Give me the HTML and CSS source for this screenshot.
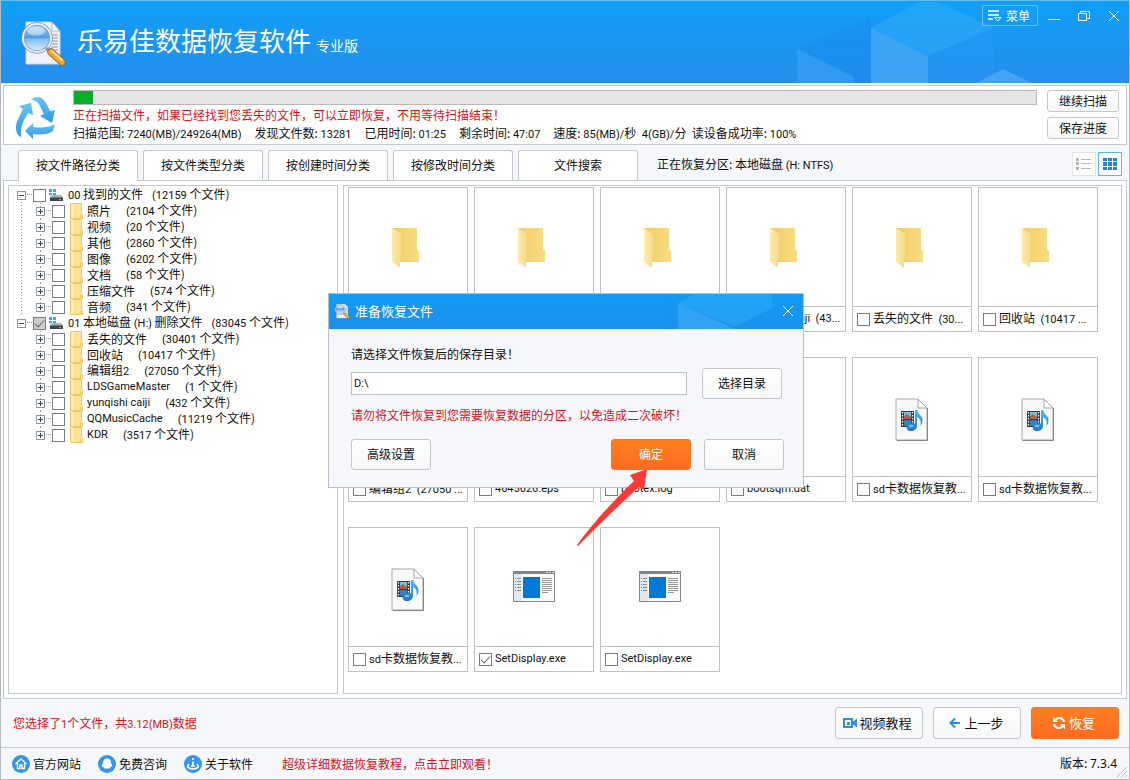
FILE: index.html
```html
<!DOCTYPE html>
<html lang="zh-CN">
<head>
<meta charset="utf-8">
<meta name="viewport" content="width=device-width, initial-scale=1">
<title>乐易佳数据恢复软件</title>
<link rel="stylesheet" href="styles.css">
</head>
<body>
<svg class="sprite" aria-hidden="true">
  <defs>
    <linearGradient id="g-front" x1="0" x2="1"><stop offset="0" stop-color="#fdebae"/><stop offset="1" stop-color="#f8db86"/></linearGradient>
    <linearGradient id="g-back" x1="0" x2="1"><stop offset="0" stop-color="#efcb66"/><stop offset="1" stop-color="#fadd82"/></linearGradient>
    <linearGradient id="g-lens" x1="0" y1="0" x2="0" y2="1"><stop offset="0" stop-color="#b5d9fb"/><stop offset=".48" stop-color="#4f9de8"/><stop offset=".55" stop-color="#86bef3"/><stop offset="1" stop-color="#e2f1ff"/></linearGradient>
    <linearGradient id="g-arrow" x1="0" y1="0" x2="0" y2="1"><stop offset="0" stop-color="#69c4f3"/><stop offset="1" stop-color="#2c97e4"/></linearGradient>
    <linearGradient id="g-note" x1="0" y1="0" x2="0" y2="1"><stop offset="0" stop-color="#55b8ee"/><stop offset="1" stop-color="#1878cf"/></linearGradient>
  </defs>
  <symbol id="logo" viewBox="0 0 46 46">
    <path d="M5 1h25l9 9v33H5z" fill="#eef1fa" stroke="#c9d3e8"/>
    <path d="M31 1v9h8z" fill="#fff" stroke="#9fb3d3"/>
    <path d="M29 14h8M31 17h6M31 20h6M31 23h6M30 26h7M28 29h9" stroke="#8593b5" stroke-width="1.2"/>
    <circle cx="16" cy="17" r="14" fill="url(#g-lens)" stroke="#7d8fae" stroke-width="3.4"/>
    <circle cx="16" cy="17" r="14" fill="none" stroke="#e6eef9" stroke-width="2"/>
    <ellipse cx="15" cy="10" rx="9" ry="4.500" fill="#fff" opacity=".45"/>
    <path d="M25 27l4 4" stroke="#8b95a8" stroke-width="3"/>
    <path d="M30 31l11 10" stroke="#a9681a" stroke-width="7.500" stroke-linecap="round"/>
    <path d="M30 31l11 10" stroke="#f3a72e" stroke-width="5.500" stroke-linecap="round"/>
    <path d="M31 30l10 9" stroke="#ffe39a" stroke-width="1.800" stroke-linecap="round"/>
  </symbol>
  <symbol id="recycle" viewBox="0 0 42 44">
    <g fill="url(#g-arrow)">
      <path d="M15 2c2-1 4-2 7-2 4 0 6 3 8 6l4 8 5-1-3 13-12-7 4-2-4-8c-2-4-5-6-9-7z"/>
      <path d="M3 9l12-3 2 12-5-2c-4 7-8 13-7 24-4-2-5-6-5-10 0-6 4-11 7-18z"/>
      <path d="M9 34l8-8v4c8 1 15 1 22-3l-2 7c-6 4-13 4-20 3v5z"/>
    </g>
  </symbol>
  <symbol id="menu" viewBox="0 0 14 12">
    <path d="M0 1h11M0 5h11M0 9h5" stroke="#fff" stroke-width="1.300" fill="none"/>
    <path d="M6.500 7.500h6.500l-3.200 3.500z" stroke="#fff" fill="none"/>
  </symbol>
  <symbol id="drive" viewBox="0 0 16 16">
    <path d="M1 2h3v3H1zM5 2h3v3H5zM1 6h3v2H1zM5 6h3v2H5z" fill="#21b3e0"/>
    <path d="M4 8h9l2 3H2z" fill="#aab1b4"/>
    <path d="M2 10.500h13V14H2z" fill="#3c464a"/><path d="M11 12h2v1h-2z" fill="#4fe36a"/>
  </symbol>
  <symbol id="dir" viewBox="0 0 16 16">
    <path d="M2.500.5h11v10l1 1v4h-12z" fill="#fbe295" stroke="#edcb6c"/>
    <path d="M3.500 1h2v14h-2z" fill="#fff0b8"/><path d="M12.500 11.500v4" stroke="#edcb6c"/>
  </symbol>
  <symbol id="folder" viewBox="0 0 28 41">
    <path d="M0 0h25v21l2 2v11H2z" fill="url(#g-back)"/>
    <path d="M0 0l9 6v23l-1 2v9l-8-6z" fill="url(#g-front)"/>
  </symbol>
  <symbol id="media" viewBox="0 0 34 43">
    <path d="M1 1h22l9 9v32H1z" fill="#f9f9fa" stroke="#a5a7aa"/>
    <path d="M32.500 10v32.500H2" fill="none" stroke="#838689"/>
    <path d="M23 1v9h9z" fill="#fff" stroke="#a5a7aa"/>
    <path d="M6 13h13v16H6z" fill="#353b40"/>
    <path d="M9 14h7v6H9z" fill="#7cc0df"/><path d="M9 18l3-2 4 3v2H9z" fill="#b85f43"/><path d="M9 22h7v6H9z" fill="#2f80c4"/>
    <path d="M7.500 14v15M17.500 14v15" stroke="#fff" stroke-width="1.300" stroke-dasharray="1.500 1.500"/>
    <path d="M20 12h2.500c0 5 5 5 5 10 0 3-1 4-2 6 1-6-1-8-3.500-9v9c0 3-3 5-6 5s-5-2-4-4.500 4-4 8-3z" fill="url(#g-note)"/>
    <ellipse cx="16" cy="28" rx="2.500" ry="1.300" fill="#8bd0f5" opacity=".7"/>
  </symbol>
  <symbol id="exe" viewBox="0 0 42 32">
    <path d="M.5.5h41v30H.5z" fill="#f8f9fa" stroke="#858585"/>
    <path d="M1 3h8v27H1z" fill="#dfe9f2"/>
    <path d="M0 0h42v3H0z" fill="#858585"/>
    <path d="M33 1.500h2M36 1.500h2M39 1.500h2" stroke="#ddd"/>
    <path d="M10 6h17v21H10z" fill="#0078d7"/>
    <path d="M2 7.500h1M4 7.500h4M2 10.500h1M4 10.500h4M2 13.500h1M4 13.500h4M2 16.500h1M4 16.500h4M2 19.500h1M4 19.500h4" stroke="#888"/>
    <path d="M29 7.500h10M29 9.500h10M29 11.500h10M29 13.500h10M29 15.500h10M29 17.500h10M29 19.500h10M29 21.500h6" stroke="#999"/>
  </symbol>
</svg>

<div class="window">
  <header class="header">
    <svg class="cubes" viewBox="0 0 340 82" aria-hidden="true">
      <path d="M8 48L82 16v66H65v-6z" fill="#1684ee" opacity=".3"/>
      <path d="M8 48l57 28v6H8z" fill="#4fb0f8" opacity=".35"/>
      <path d="M82 27l48-26h20l55 26-66 28z" fill="#35b0f8" opacity=".45"/>
      <path d="M82 27l57 28v27H82z" fill="#50adf6" opacity=".6"/>
      <path d="M139 55l66-28v55h-66z" fill="#2b9cf5" opacity=".3"/>
      <path d="M187 82l27-14 29 14z" fill="#55b1f6" opacity=".6"/>
    </svg>
    <svg class="logo" aria-hidden="true"><use href="#logo"/></svg>
    <h1 class="title">乐易佳数据恢复软件</h1>
    <span class="edition">专业版</span>
    <div class="controls">
      <button class="menu-btn" type="button"><svg class="menu-icon" aria-hidden="true"><use href="#menu"/></svg>菜单</button>
      <button class="win-btn" type="button" aria-label="最小化"><svg class="win-icon" viewBox="0 0 12 12"><path d="M0 9.500h12"/></svg></button>
      <button class="win-btn" type="button" aria-label="还原"><svg class="win-icon" viewBox="0 0 12 12"><path d="M.5 3.500h8v7h-8zM2.500 3V1.500h9v7H9"/></svg></button>
      <button class="win-btn" type="button" aria-label="关闭"><svg class="win-icon" viewBox="0 0 12 12"><path d="M1 1l10 10M11 1L1 11"/></svg></button>
    </div>
  </header>

  <section class="status">
    <svg class="recycle" aria-hidden="true"><use href="#recycle"/></svg>
    <div class="scan">
      <progress class="bar" value="2" max="100" aria-label="扫描进度"></progress>
      <p class="line alert">正在扫描文件，如果已经找到您丢失的文件，可以立即恢复，不用等待扫描结束！</p>
      <p class="line stats">
        <span>扫描范围: <span class="n">7240(MB)/249264(MB)</span></span>
        <span>发现文件数: <span class="n">13281</span></span>
        <span>已用时间: <span class="n">01:25</span></span>
        <span>剩余时间: <span class="n">47:07</span></span>
        <span>速度: <span class="n">85(MB)/</span>秒&nbsp; <span class="n">4(GB)/</span>分&nbsp; 读设备成功率: <span class="n">100%</span></span>
      </p>
    </div>
    <div class="scan-actions">
      <button class="btn small" type="button">继续扫描</button>
      <button class="btn small" type="button">保存进度</button>
    </div>
  </section>

  <nav class="tabs">
    <button class="tab active" type="button">按文件路径分类</button>
    <button class="tab" type="button">按文件类型分类</button>
    <button class="tab" type="button">按创建时间分类</button>
    <button class="tab" type="button">按修改时间分类</button>
    <button class="tab" type="button">文件搜索</button>
    <span class="partition">正在恢复分区: 本地磁盘 <span class="n">(H: NTFS)</span></span>
    <div class="views">
      <button class="view" type="button" aria-label="列表"><svg class="view-icon" viewBox="0 0 16 12"><path d="M0 0h3v3H0zM0 4h3v3H0zM0 9h3v3H0zM5 1h10v1H5zM5 5h10v1H5zM5 10h10v1H5z" fill="#b3b6ba"/></svg></button>
      <button class="view on" type="button" aria-label="图标"><svg class="view-icon" viewBox="0 0 16 12"><path d="M1 0h4v3H1zM6 0h4v3H6zM11 0h4v3h-4zM1 4h4v4H1zM6 4h4v4H6zM11 4h4v4h-4zM1 9h4v3H1zM6 9h4v3H6zM11 9h4v3h-4z" fill="#2384d8"/></svg></button>
    </div>
  </nav>

  <main class="main">
    <aside class="pane tree-pane">
      <ul class="tree">
        <li class="root linked">
          <div class="row"><button class="exp" type="button" aria-label="折叠"></button><label class="node"><input class="check" type="checkbox"><svg class="ico"><use href="#drive"/></svg><span class="name"><span class="n">00</span> 找到的文件</span><span class="count near"><span class="n">(12159</span> 个文件)</span></label></div>
          <ul class="kids">
            <li class="row"><button class="exp plus" type="button" aria-label="展开"></button><label class="node"><input class="check" type="checkbox"><svg class="ico"><use href="#dir"/></svg><span class="name">照片</span><span class="count"><span class="n">(2104</span> 个文件)</span></label></li>
            <li class="row"><button class="exp plus" type="button" aria-label="展开"></button><label class="node"><input class="check" type="checkbox"><svg class="ico"><use href="#dir"/></svg><span class="name">视频</span><span class="count"><span class="n">(20</span> 个文件)</span></label></li>
            <li class="row"><button class="exp plus" type="button" aria-label="展开"></button><label class="node"><input class="check" type="checkbox"><svg class="ico"><use href="#dir"/></svg><span class="name">其他</span><span class="count"><span class="n">(2860</span> 个文件)</span></label></li>
            <li class="row"><button class="exp plus" type="button" aria-label="展开"></button><label class="node"><input class="check" type="checkbox"><svg class="ico"><use href="#dir"/></svg><span class="name">图像</span><span class="count"><span class="n">(6202</span> 个文件)</span></label></li>
            <li class="row"><button class="exp plus" type="button" aria-label="展开"></button><label class="node"><input class="check" type="checkbox"><svg class="ico"><use href="#dir"/></svg><span class="name">文档</span><span class="count"><span class="n">(58</span> 个文件)</span></label></li>
            <li class="row"><button class="exp plus" type="button" aria-label="展开"></button><label class="node"><input class="check" type="checkbox"><svg class="ico"><use href="#dir"/></svg><span class="name">压缩文件</span><span class="count"><span class="n">(574</span> 个文件)</span></label></li>
            <li class="row"><button class="exp plus" type="button" aria-label="展开"></button><label class="node"><input class="check" type="checkbox"><svg class="ico"><use href="#dir"/></svg><span class="name">音频</span><span class="count"><span class="n">(341</span> 个文件)</span></label></li>
          </ul>
        </li>
        <li class="root">
          <div class="row"><button class="exp" type="button" aria-label="折叠"></button><label class="node"><input class="check partial" type="checkbox" checked><svg class="ico"><use href="#drive"/></svg><span class="name"><span class="n">01</span> 本地磁盘 <span class="n">(H:)</span> 删除文件</span><span class="count near"><span class="n">(83045</span> 个文件)</span></label></div>
          <ul class="kids">
            <li class="row"><button class="exp plus" type="button" aria-label="展开"></button><label class="node"><input class="check" type="checkbox"><svg class="ico"><use href="#dir"/></svg><span class="name">丢失的文件</span><span class="count"><span class="n">(30401</span> 个文件)</span></label></li>
            <li class="row"><button class="exp plus" type="button" aria-label="展开"></button><label class="node"><input class="check" type="checkbox"><svg class="ico"><use href="#dir"/></svg><span class="name">回收站</span><span class="count"><span class="n">(10417</span> 个文件)</span></label></li>
            <li class="row"><button class="exp plus" type="button" aria-label="展开"></button><label class="node"><input class="check" type="checkbox"><svg class="ico"><use href="#dir"/></svg><span class="name">编辑组<span class="n">2</span></span><span class="count"><span class="n">(27050</span> 个文件)</span></label></li>
            <li class="row"><button class="exp plus" type="button" aria-label="展开"></button><label class="node"><input class="check" type="checkbox"><svg class="ico"><use href="#dir"/></svg><span class="name n">LDSGameMaster</span><span class="count"><span class="n">(1</span> 个文件)</span></label></li>
            <li class="row"><button class="exp plus" type="button" aria-label="展开"></button><label class="node"><input class="check" type="checkbox"><svg class="ico"><use href="#dir"/></svg><span class="name n">yunqishi caiji</span><span class="count"><span class="n">(432</span> 个文件)</span></label></li>
            <li class="row"><button class="exp plus" type="button" aria-label="展开"></button><label class="node"><input class="check" type="checkbox"><svg class="ico"><use href="#dir"/></svg><span class="name n">QQMusicCache</span><span class="count"><span class="n">(11219</span> 个文件)</span></label></li>
            <li class="row"><button class="exp plus" type="button" aria-label="展开"></button><label class="node"><input class="check" type="checkbox"><svg class="ico"><use href="#dir"/></svg><span class="name n">KDR</span><span class="count"><span class="n">(3517</span> 个文件)</span></label></li>
          </ul>
        </li>
      </ul>
    </aside>

    <section class="pane files">
      <label class="tile"><span class="thumb"><svg class="folder"><use href="#folder"/></svg></span><span class="cap"><input class="check" type="checkbox"><span class="fname n">KDR</span></span></label>
      <label class="tile"><span class="thumb"><svg class="folder"><use href="#folder"/></svg></span><span class="cap"><input class="check" type="checkbox"><span class="fname n">LDSGameMaster</span></span></label>
      <label class="tile"><span class="thumb"><svg class="folder"><use href="#folder"/></svg></span><span class="cap"><input class="check" type="checkbox"><span class="fname n">QQMusicCache</span></span></label>
      <label class="tile"><span class="thumb"><svg class="folder"><use href="#folder"/></svg></span><span class="cap"><input class="check" type="checkbox"><span class="fname n">yunqishi caiji&nbsp; (43...</span></span></label>
      <label class="tile"><span class="thumb"><svg class="folder"><use href="#folder"/></svg></span><span class="cap"><input class="check" type="checkbox"><span class="fname">丢失的文件&nbsp; <span class="n">(30...</span></span></span></label>
      <label class="tile"><span class="thumb"><svg class="folder"><use href="#folder"/></svg></span><span class="cap"><input class="check" type="checkbox"><span class="fname">回收站&nbsp; <span class="n">(10417 ...</span></span></span></label>
      <label class="tile"><span class="thumb"><svg class="folder"><use href="#folder"/></svg></span><span class="cap"><input class="check" type="checkbox"><span class="fname">编辑组<span class="n">2&nbsp; (27050 ...</span></span></span></label>
      <label class="tile"><span class="thumb"></span><span class="cap"><input class="check" type="checkbox"><span class="fname n">4645626.eps</span></span></label>
      <label class="tile"><span class="thumb"></span><span class="cap"><input class="check" type="checkbox"><span class="fname n">bootex.log</span></span></label>
      <label class="tile"><span class="thumb"></span><span class="cap"><input class="check" type="checkbox"><span class="fname n">bootsqm.dat</span></span></label>
      <label class="tile"><span class="thumb"><svg class="media"><use href="#media"/></svg></span><span class="cap"><input class="check" type="checkbox"><span class="fname"><span class="n">sd</span>卡数据恢复教<span class="n">...</span></span></span></label>
      <label class="tile"><span class="thumb"><svg class="media"><use href="#media"/></svg></span><span class="cap"><input class="check" type="checkbox"><span class="fname"><span class="n">sd</span>卡数据恢复教<span class="n">...</span></span></span></label>
      <label class="tile"><span class="thumb"><svg class="media"><use href="#media"/></svg></span><span class="cap"><input class="check" type="checkbox"><span class="fname"><span class="n">sd</span>卡数据恢复教<span class="n">...</span></span></span></label>
      <label class="tile"><span class="thumb"><svg class="exe"><use href="#exe"/></svg></span><span class="cap"><input class="check" type="checkbox" checked><span class="fname n">SetDisplay.exe</span></span></label>
      <label class="tile"><span class="thumb"><svg class="exe"><use href="#exe"/></svg></span><span class="cap"><input class="check" type="checkbox"><span class="fname n">SetDisplay.exe</span></span></label>
    </section>
  </main>

  <div class="actions">
    <p class="selected">您选择了<span class="n">1</span>个文件，共<span class="n">3.12(MB)</span>数据</p>
    <button class="btn big tight" type="button"><svg class="act" viewBox="0 0 14 14"><path d="M1 3h8v8H1z" fill="none" stroke="#2f8fe0" stroke-width="2"/><path d="M4 6h3v3H4z" fill="#2f8fe0"/><path d="M10 5.500l4-3v9l-4-3z" fill="#2f8fe0"/></svg>视频教程</button>
    <button class="btn big" type="button"><svg class="act" viewBox="0 0 14 14"><path d="M13 7H4M8 2.500L3.500 7 8 11.500" fill="none" stroke="#2f8fe0" stroke-width="2"/></svg>上一步</button>
    <button class="btn big primary" type="button"><svg class="act" viewBox="0 0 14 14"><path d="M3 4.500C5 1 11 1 12 6M11 9.500C9 13 3 13 2 8" fill="none" stroke="#fff" stroke-width="2"/><path d="M1 1v5h5zM13 13V8H8z" fill="#fff"/></svg>恢复</button>
  </div>

  <footer class="footer">
    <a class="flink" href="#site"><svg class="round" viewBox="0 0 18 18"><circle cx="9" cy="9" r="9" fill="#3595e6"/><path d="M3.500 9L9 4l5.500 5M5.500 8v5.500h2.500V10h2v3.500h2.500V8" fill="none" stroke="#fff" stroke-width="1.300"/></svg>官方网站</a>
    <a class="flink" href="#ask"><svg class="round" viewBox="0 0 18 18"><circle cx="9" cy="9" r="9" fill="#3595e6"/><path d="M9 3.500c3 0 4 2 4 4.500 1 1.500 1.500 3 1 4l-1.500-.5c0 1-.5 1.500-1 2H6.500c-.5-.5-1-1-1-2L4 12c-.5-1 0-2.500 1-4 0-2.500 1-4.500 4-4.500z" fill="#fff"/></svg>免费咨询</a>
    <a class="flink" href="#about"><svg class="round" viewBox="0 0 18 18"><circle cx="9" cy="9" r="9" fill="#3595e6"/><path d="M9 3v2M9 6.500V11M7 11h4" fill="none" stroke="#fff" stroke-width="1.700"/><path d="M5 9c-3 3 0 5 4 5s7-2 4-5" fill="none" stroke="#fff" stroke-width="1.500"/></svg>关于软件</a>
    <a class="promo" href="#guide">超级详细数据恢复教程，点击立即观看！</a>
    <span class="version">版本: <span class="vn">7.3.4</span></span>
    <svg class="grip" viewBox="0 0 12 12" aria-hidden="true"><path d="M1 11L11 1M5 11l6-6M9 11l2-2" stroke="#b7bcc2" fill="none"/></svg>
  </footer>

  <div class="dialog" role="dialog" aria-labelledby="dlg-title">
    <div class="dlg-head">
      <svg class="dlg-cubes" viewBox="0 0 140 35" aria-hidden="true"><path d="M0 0h32L15 9v26H0z" fill="#1b8cf0" opacity=".15"/><path d="M15 9L30 0h79v14L72 33 15 9z" fill="#2eacf7" opacity=".5"/><path d="M15 9l57 26H15z" fill="#4cb1f8" opacity=".5"/></svg>
      <svg class="dlg-logo" aria-hidden="true"><use href="#logo"/></svg>
      <h2 class="dlg-title" id="dlg-title">准备恢复文件</h2>
      <button class="win-btn" type="button" aria-label="关闭对话框"><svg class="win-icon" viewBox="0 0 12 12"><path d="M1 1l10 10M11 1L1 11"/></svg></button>
    </div>
    <div class="dlg-body">
      <label class="dlg-label" for="path">请选择文件恢复后的保存目录！</label>
      <div class="dlg-path">
        <input class="path n" id="path" type="text" value="D:\">
        <button class="btn mid" type="button">选择目录</button>
      </div>
      <p class="alert dlg-warn">请勿将文件恢复到您需要恢复数据的分区，以免造成二次破坏！</p>
      <div class="dlg-actions">
        <button class="btn mid adv" type="button">高级设置</button>
        <button class="btn mid primary" type="button">确定</button>
        <button class="btn mid" type="button">取消</button>
      </div>
    </div>
    <svg class="pointer" viewBox="0 0 72 80" aria-hidden="true"><path d="M71 1L54 7l4 6C38 32 16 56 1 77v1l2-1C22 58 42 38 63 19l5 3z" fill="#f93b37"/></svg>
  </div>
</div>
</body>
</html>
```

FILE: styles.css
```css
* { box-sizing: border-box; }

body {
  margin: 0;
  font: 12px/16px "Noto Sans CJK SC", sans-serif;
  color: #111;
  background: #f5f7fa;
}

h1, h2, p, ul { margin: 0; padding: 0; font-weight: 400; }
ul { list-style: none; }
a { color: inherit; text-decoration: none; }
button { margin: 0; padding: 0; font: inherit; color: inherit; background: none; border: 0; white-space: nowrap; }
svg { display: block; flex: none; }

.sprite { position: absolute; width: 0; height: 0; }
.n { font-family: Roboto, "Noto Sans CJK SC", sans-serif; font-size: 11px; }
.alert { color: #d9121c; }

.window {
  position: relative;
  display: flex;
  flex-direction: column;
  min-height: 100vh;
  border: 1px solid #b4bcc3;
  border-top-color: #58bdf5;
}

/* Title bar */
.header {
  position: relative;
  display: flex;
  align-items: center;
  height: 82px;
  padding-left: 20px;
  color: #fff;
  background: linear-gradient(#109ff7, #258eeb);
}
.cubes { position: absolute; right: 0; top: 0; width: 340px; height: 82px; }
.logo { width: 46px; height: 46px; margin-top: 4px; }
.title { margin-left: 10px; padding-bottom: 4px; font-size: 26px; line-height: 40px; }
.edition { margin: 6px 0 0 5px; font-size: 14px; }
.controls { position: relative; display: flex; align-items: center; align-self: flex-start; gap: 7px; margin: 4px 4px 0 auto; }
.menu-btn {
  display: flex;
  align-items: center;
  gap: 4px;
  height: 21px;
  margin-right: -3px;
  padding: 0 7px 0 5px;
  border: 1px solid #6fc3fa;
  border-radius: 2px;
}
.menu-icon { width: 14px; height: 12px; }
.win-btn { display: grid; place-items: center; width: 23px; height: 20px; }
.win-icon { width: 12px; height: 12px; fill: none; stroke: #fff; }

/* Scan status */
.status {
  display: flex;
  gap: 10px;
  margin: 2px 2px 0;
  padding: 4px 7px 0 12px;
  background: #fff;
  border: 1px solid #c6c9cd;
}
.recycle { width: 42px; height: 44px; margin-top: 7px; }
.scan { flex: 1; margin-left: 5px; }
.bar { display: block; width: 100%; height: 15px; margin-bottom: 1px; appearance: none; border: 1px solid #b9b9b9; }
.bar::-webkit-progress-bar { background: #e5e5e5; }
.bar::-webkit-progress-value { background: #06b025; }
.line { line-height: 18px; }
.stats { display: flex; gap: 13px; white-space: nowrap; }
.scan-actions { display: grid; align-content: start; gap: 5px; }

/* Buttons */
.btn {
  display: flex;
  align-items: center;
  justify-content: center;
  background: linear-gradient(#fff, #f6f7f8);
  border: 1px solid #c3c6ca;
  border-radius: 3px;
}
.btn.small { width: 72px; height: 22px; }
.btn.mid { width: 80px; height: 31px; }
.btn.big { gap: 3px; width: 88px; height: 32px; padding-right: 3px; font-size: 13px; }
.btn.tight { gap: 2px; }
.btn.primary { color: #fff; background: linear-gradient(#ff801f, #fb6a22); border-color: #fb7424; }
.act { width: 14px; height: 14px; }

/* Tabs */
.tabs { display: flex; align-items: flex-end; gap: 5px; height: 35px; padding: 0 7px 0 17px; }
.tab {
  width: 120px;
  height: 30px;
  padding-bottom: 2px;
  background: #fff;
  border: 1px solid #c6c9cd;
  border-bottom: 0;
  border-radius: 3px 3px 0 0;
}
.tab.active { position: relative; height: 31px; margin-bottom: -1px; }
.partition { align-self: center; margin: 4px 0 0 14px; }
.views { display: flex; align-self: center; gap: 2px; margin: 2px 0 0 auto; }
.view { display: grid; place-items: center; width: 24px; height: 24px; background: #fff; border: 1px solid #e1e4e8; }
.view.on { border-color: #62b1ed; }
.view-icon { width: 16px; height: 12px; }

/* Main area */
.main {
  display: flex;
  flex: 1;
  gap: 5px;
  margin: 0 2px;
  padding: 4px;
  background: #fff;
  border: 1px solid #c6c9cd;
}
.pane { border: 1px solid #c6c9cd; }
.tree-pane { flex: none; width: 330px; padding-top: 1px; }

.root.linked { background: repeating-linear-gradient(#999 0 1px, transparent 1px 3px) 12px 12px / 1px 100% no-repeat; }
.row { display: flex; align-items: center; height: 16px; padding-left: 8px; white-space: nowrap; }
.kids .row { padding-left: 27px; background: repeating-linear-gradient(#999 0 1px, transparent 1px 3px) 31px 0 / 1px 100% no-repeat; }
.kids .row:last-child { background-size: 1px 8px; }
.exp {
  flex: none;
  width: 9px;
  height: 9px;
  border: 1px solid #8e98a5;
  background: linear-gradient(#34424f, #34424f) center / 5px 1px no-repeat, #fff;
}
.exp.plus {
  background: linear-gradient(#34424f, #34424f) center / 5px 1px no-repeat, linear-gradient(#34424f, #34424f) center / 1px 5px no-repeat, #fff;
}
.node {
  display: flex;
  align-items: center;
  padding-left: 7px;
  background: repeating-linear-gradient(90deg, transparent 0 1px, #999 1px 2px) 0 8px / 7px 1px no-repeat;
}
.ico { width: 16px; height: 16px; margin: 0 4px 0 2px; }
.kids .ico { margin: 0 3px; }
.count { margin-left: 15px; }
.count.near { margin-left: 9px; }

.check {
  display: grid;
  place-items: center;
  flex: none;
  width: 13px;
  height: 13px;
  margin: 0;
  appearance: none;
  background: #fff;
  border: 1px solid #777d83;
}
.check:checked::after {
  content: "";
  width: 4px;
  height: 8px;
  margin-bottom: 2px;
  border: solid #666;
  border-width: 0 1px 1px 0;
  transform: rotate(42deg);
}
.check.partial { background: #ccc; }

.files {
  display: grid;
  flex: 1;
  grid-template-columns: repeat(auto-fill, 120px);
  align-content: start;
  gap: 25px 6px;
  min-width: 0;
  padding: 1px 4px;
}
.tile { min-width: 0; border: 1px solid #bfc1c4; }
.thumb { display: grid; place-items: center; height: 119px; border-bottom: 1px solid #bfc1c4; }
.cap { display: flex; align-items: center; gap: 3px; height: 24px; padding: 0 2px 0 4px; }
.fname { overflow: hidden; white-space: nowrap; text-overflow: ellipsis; }
.folder { width: 28px; height: 41px; margin: 2px 4px 0 0; }
.media { width: 34px; height: 43px; margin-top: 4px; }
.exe { width: 42px; height: 32px; }

/* Bottom bars */
.actions { display: flex; align-items: center; gap: 10px; height: 48px; padding: 0 10px 0 12px; }
.selected { margin: 2px auto 0 0; color: #d9121c; }
.footer {
  position: relative;
  display: flex;
  align-items: center;
  height: 32px;
  padding: 0 12px 0 11px;
  border-top: 1px solid #c6c9cd;
}
.flink { display: flex; align-items: center; gap: 3px; margin-right: 17px; }
.round { width: 18px; height: 18px; }
.promo { margin-left: 12px; color: #d9121c; }
.version { margin-left: auto; }
.vn { font-family: "Noto Sans", sans-serif; font-size: 12px; }
.grip { position: absolute; right: 1px; bottom: 1px; width: 12px; height: 12px; }

/* Dialog */
.dialog {
  position: absolute;
  inset: 0 0 0 2px;
  width: 476px;
  height: fit-content;
  margin: auto;
  background: #f5f7fa;
  border: 1px solid #b9bfc5;
}
.dlg-head {
  position: relative;
  display: flex;
  align-items: center;
  height: 35px;
  padding: 0 4px 0 6px;
  color: #fff;
  background: linear-gradient(#109df5, #1c8fec);
}
.dlg-cubes { position: absolute; right: 0; top: 0; width: 140px; height: 35px; }
.dlg-logo { width: 15px; height: 15px; }
.dlg-title { margin: 0 auto 0 5px; font-size: 13px; }
.dlg-head .win-btn { position: relative; }
.dlg-body { display: flex; flex-direction: column; padding: 17px 19px 17px 22px; }
.dlg-path { display: flex; align-items: center; gap: 15px; margin-top: 6px; padding-right: 2px; }
.path { flex: 1; min-width: 0; height: 23px; padding: 0 2px; color: #111; background: #fff; border: 1px solid #bfc3c8; border-radius: 0; }
.dlg-warn { margin-top: 8px; }
.dlg-actions { display: flex; gap: 13px; margin-top: 16px; }
.adv { margin-right: auto; }
.pointer { position: absolute; left: 247px; top: 174px; width: 72px; height: 80px; }
```
